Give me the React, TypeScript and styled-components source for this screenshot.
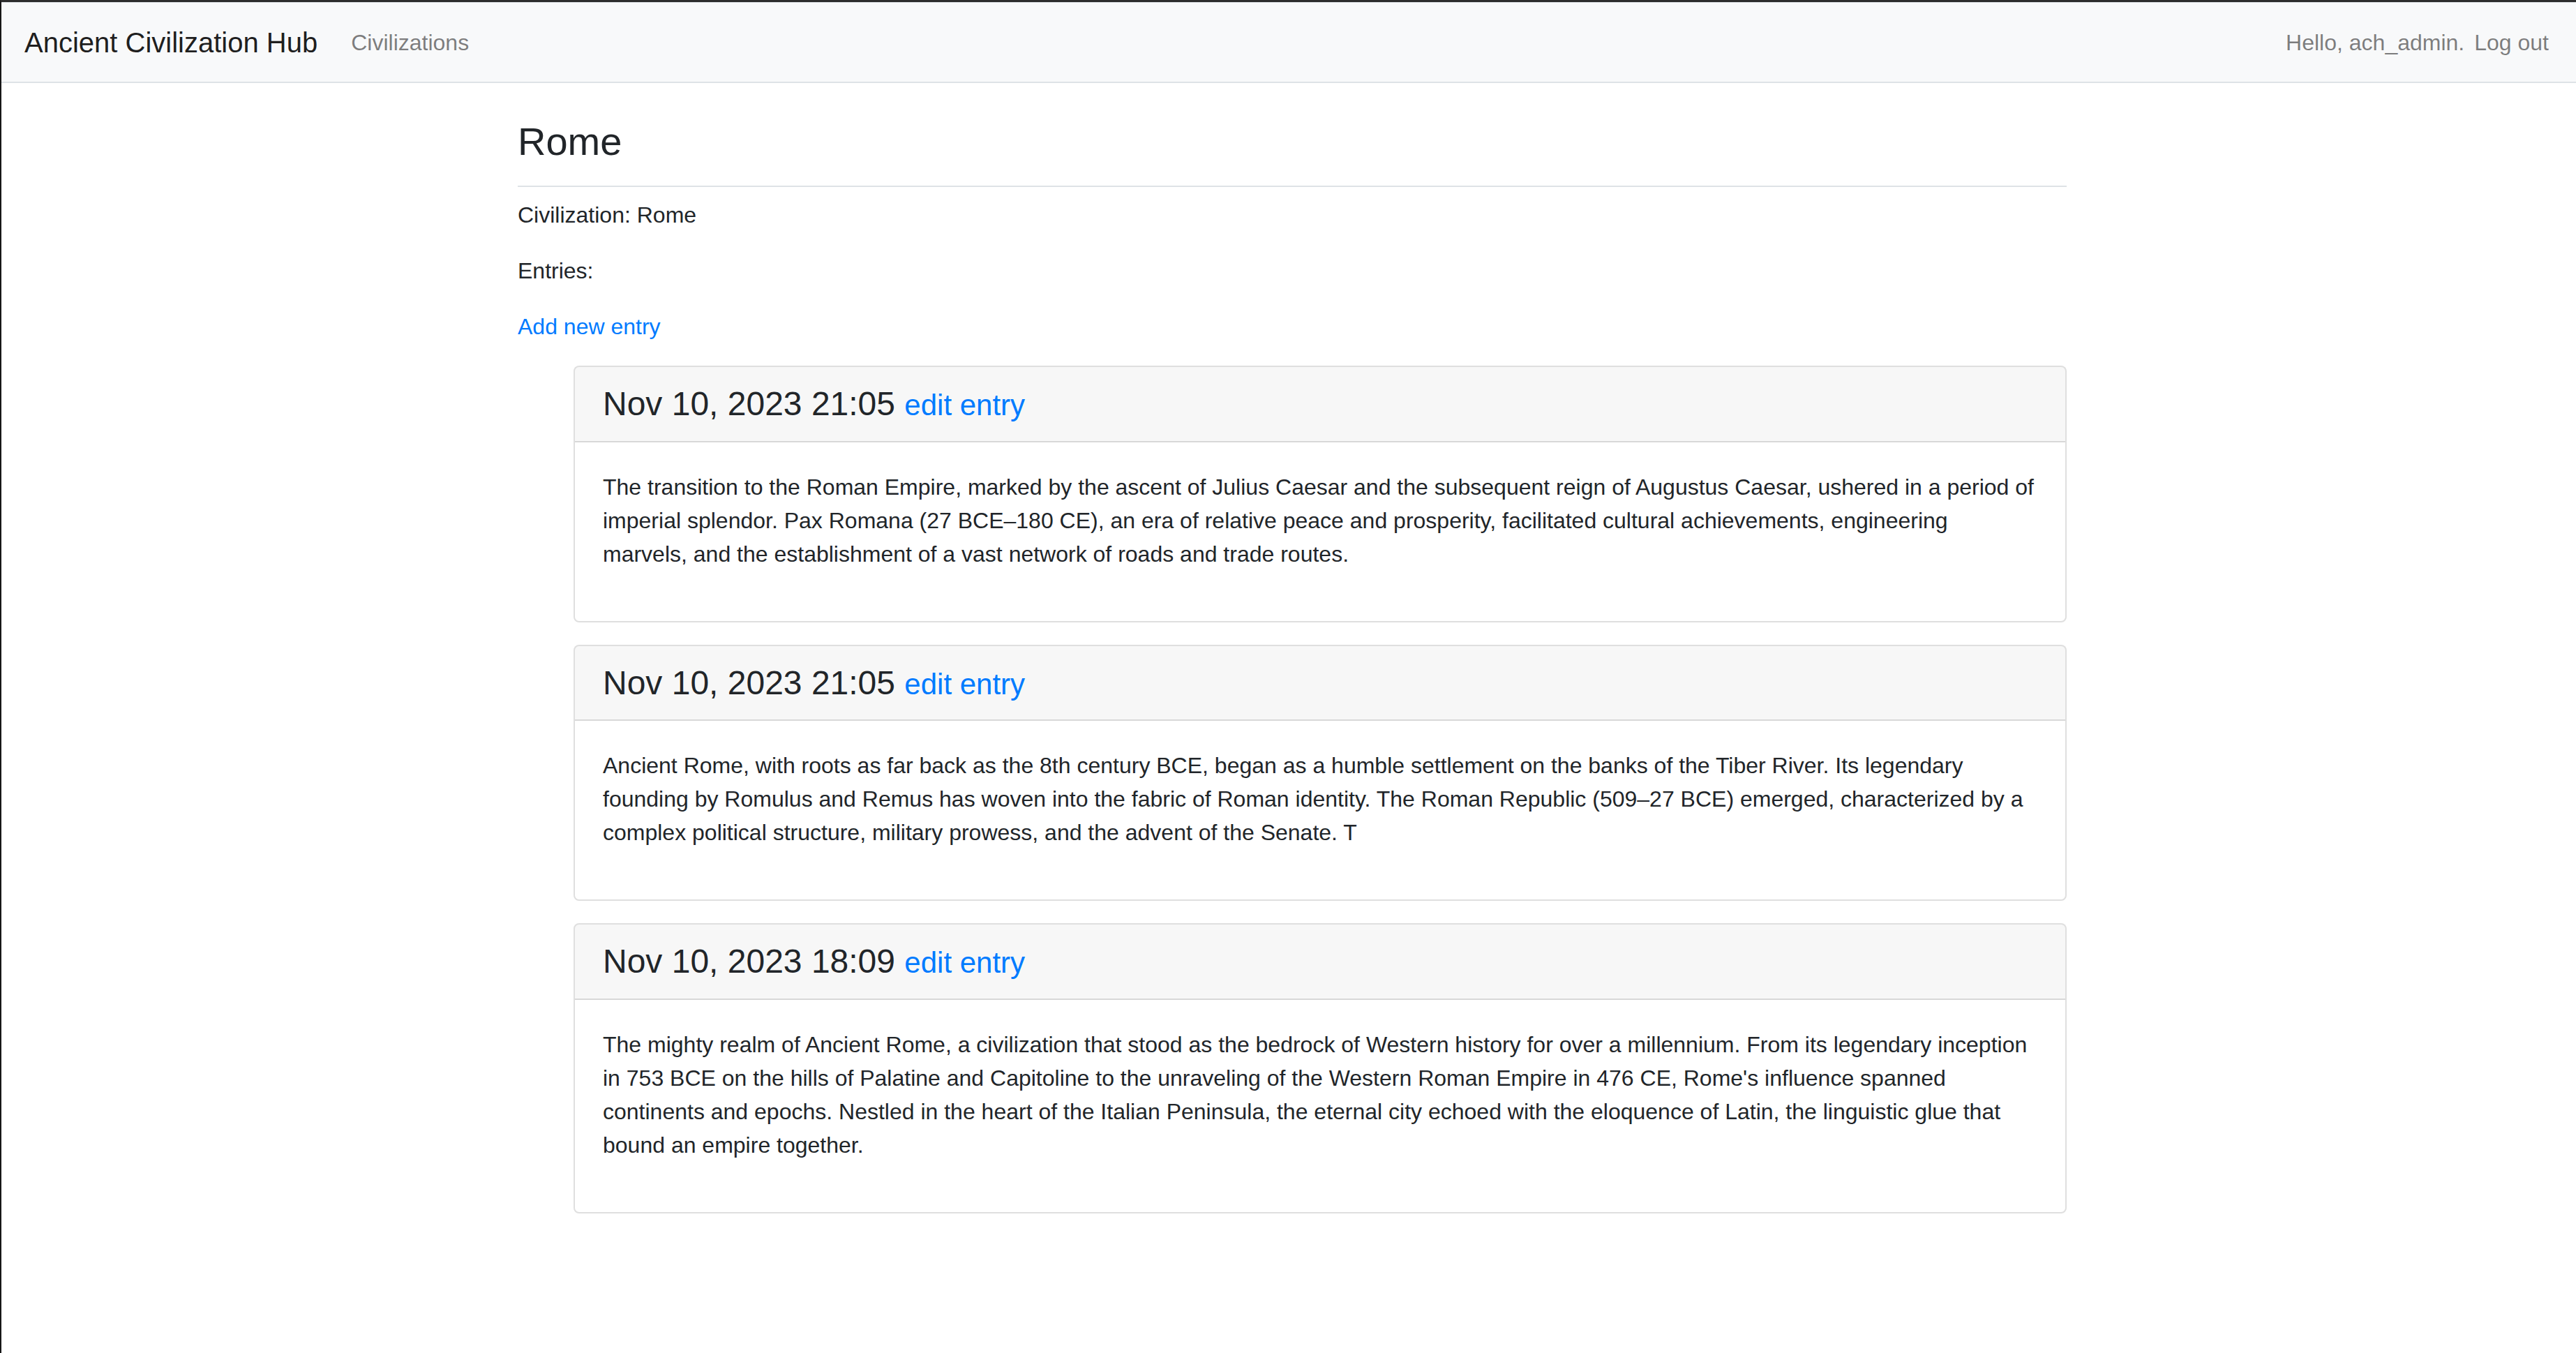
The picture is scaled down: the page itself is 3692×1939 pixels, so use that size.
import React from 'react';
import styled, { createGlobalStyle } from 'styled-components';

interface Entry {
  id: number;
  date: string;
  text: string;
}

const entries: Entry[] = [
  {
    id: 3,
    date: 'Nov 10, 2023 21:05',
    text:
      'The transition to the Roman Empire, marked by the ascent of Julius Caesar and the subsequent reign of Augustus Caesar, ushered in a period of imperial splendor. Pax Romana (27 BCE\u2013180 CE), an era of relative peace and prosperity, facilitated cultural achievements, engineering marvels, and the establishment of a vast network of roads and trade routes.',
  },
  {
    id: 2,
    date: 'Nov 10, 2023 21:05',
    text:
      'Ancient Rome, with roots as far back as the 8th century BCE, began as a humble settlement on the banks of the Tiber River. Its legendary founding by Romulus and Remus has woven into the fabric of Roman identity. The Roman Republic (509\u201327 BCE) emerged, characterized by a complex political structure, military prowess, and the advent of the Senate. T',
  },
  {
    id: 1,
    date: 'Nov 10, 2023 18:09',
    text:
      "The mighty realm of Ancient Rome, a civilization that stood as the bedrock of Western history for over a millennium. From its legendary inception in 753 BCE on the hills of Palatine and Capitoline to the unraveling of the Western Roman Empire in 476 CE, Rome's influence spanned continents and epochs. Nestled in the heart of the Italian Peninsula, the eternal city echoed with the eloquence of Latin, the linguistic glue that bound an empire together.",
  },
];

const App: React.FC = () => {
  return (
    <>
      <GlobalStyle />
      <Frame>
        <Navbar>
          <Brand href="#">Ancient Civilization Hub</Brand>
          <NavLink href="#">Civilizations</NavLink>
          <NavRight>
            <NavText>Hello, ach_admin.</NavText>
            <LogoutLink href="#">Log out</LogoutLink>
          </NavRight>
        </Navbar>

        <Container>
          <PageHeader>
            <Title>Rome</Title>
          </PageHeader>
          <Paragraph>Civilization: Rome</Paragraph>
          <Paragraph>Entries:</Paragraph>
          <Paragraph>
            <Link href="#">Add new entry</Link>
          </Paragraph>

          <EntryList>
            {entries.map((entry) => (
              <EntryItem key={entry.id}>
                <Card>
                  <CardHeader>
                    <EntryTitle>
                      {entry.date} <EditLink href="#">edit entry</EditLink>
                    </EntryTitle>
                  </CardHeader>
                  <CardBody>
                    <Paragraph>{entry.text}</Paragraph>
                  </CardBody>
                </Card>
              </EntryItem>
            ))}
          </EntryList>
        </Container>
      </Frame>
    </>
  );
};

const GlobalStyle = createGlobalStyle`
  *, *::before, *::after {
    box-sizing: border-box;
  }

  html, body {
    margin: 0;
    padding: 0;
    background: #fff;
  }

  body {
    font-family: "Liberation Sans", Arial, sans-serif;
    font-size: 32px;
    line-height: 1.5;
    color: #212529;
  }
`;

const Frame = styled.div`
  min-height: 100vh;
  border-top: 3px solid #2d2d2d;
  border-left: 2px solid #161616;
`;

const Navbar = styled.nav`
  display: flex;
  align-items: center;
  height: 116px;
  padding: 0 39px 0 33px;
  background-color: #f8f9fa;
  border-top: 1px solid #dee2e6;
  border-bottom: 2px solid #dee2e6;
`;

const Brand = styled.a`
  font-size: 40px;
  line-height: 1.5;
  color: rgba(0, 0, 0, 0.9);
  text-decoration: none;
  margin-right: 32px;
  white-space: nowrap;
`;

const NavLink = styled.a`
  padding: 0 16px;
  font-size: 32px;
  color: rgba(0, 0, 0, 0.5);
  text-decoration: none;
`;

const NavRight = styled.div`
  margin-left: auto;
  display: flex;
  align-items: center;
`;

const NavText = styled.span`
  color: rgba(0, 0, 0, 0.5);
`;

const LogoutLink = styled.a`
  margin-left: 14px;
  color: rgba(0, 0, 0, 0.5);
  text-decoration: none;
`;

const Container = styled.main`
  width: 2220px;
  margin-left: calc(50% - 1105px);
  padding-top: 50px;
`;

const PageHeader = styled.div`
  padding-bottom: 30px;
  margin-bottom: 16px;
  border-bottom: 2px solid #dee2e6;
`;

const Title = styled.h3`
  margin: 0;
  font-size: 56px;
  font-weight: 500;
  line-height: 1.2;
`;

const Paragraph = styled.p`
  margin: 0 0 32px;
`;

const Link = styled.a`
  color: #007bff;
  text-decoration: none;
`;

const EditLink = styled(Link)`
  font-size: 42px;
`;

const EntryList = styled.ul`
  list-style: none;
  margin: 0;
  padding-left: 80px;
`;

const EntryItem = styled.li`
  margin-bottom: 32px;
`;

const Card = styled.div`
  background-color: #fff;
  border: 2px solid rgba(0, 0, 0, 0.125);
  border-radius: 8px;
  overflow: hidden;
`;

const CardHeader = styled.div`
  padding: 24px 40px;
  background-color: rgba(0, 0, 0, 0.03);
  border-bottom: 2px solid rgba(0, 0, 0, 0.125);
`;

const EntryTitle = styled.h4`
  margin: 0;
  font-size: 48px;
  font-weight: 500;
  line-height: 1.2;
`;

const CardBody = styled.div`
  padding: 40px;
`;

export default App;
